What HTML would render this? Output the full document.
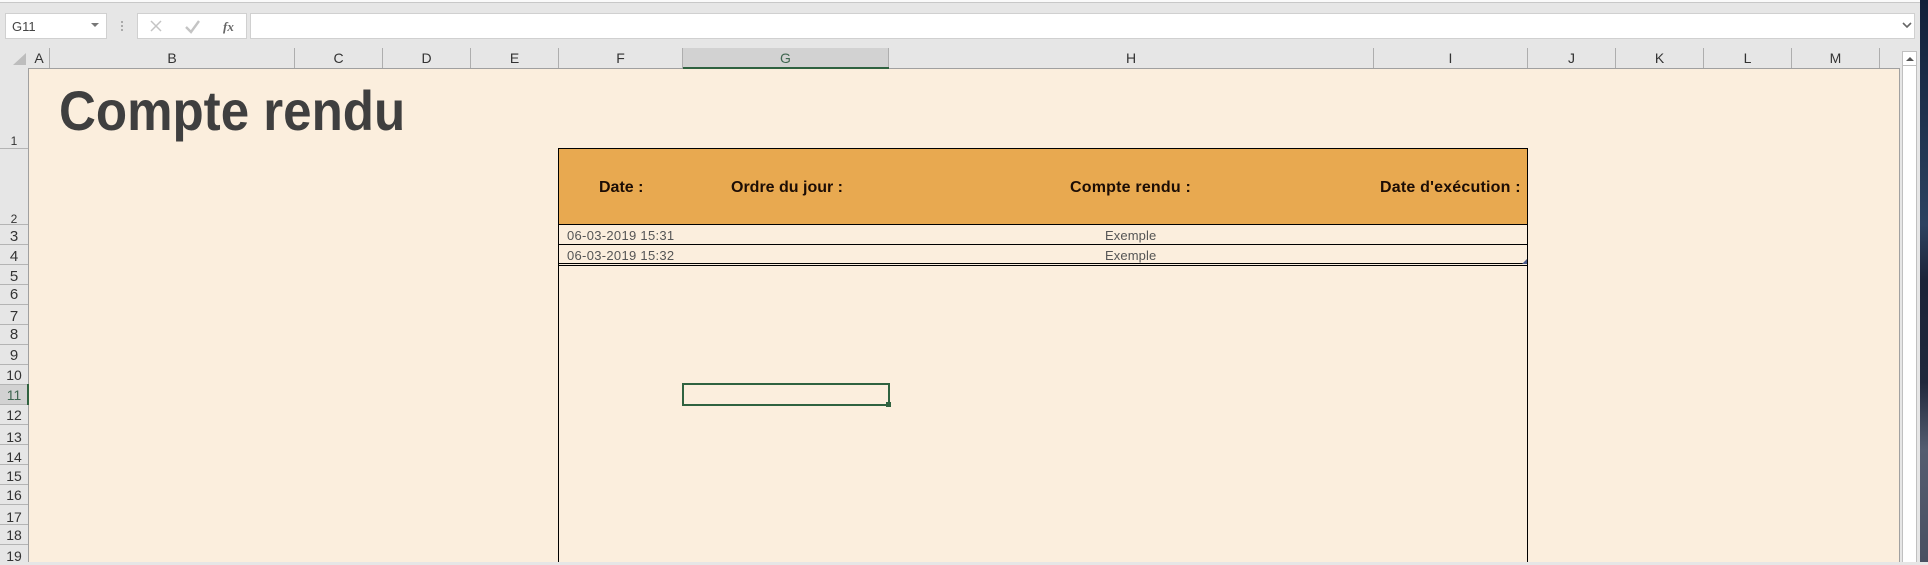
<!DOCTYPE html>
<html><head><meta charset="utf-8"><style>
html,body{margin:0;padding:0}
body{width:1928px;height:562px;overflow:hidden;position:relative;background:#e6e6e6;font-family:"Liberation Sans",sans-serif}
div{position:absolute;box-sizing:border-box}
.l{background:#000}
.ch{top:48px;height:20px;border-right:1px solid #aeaeae;text-align:center;font-size:14px;line-height:21px;color:#333}
.rh{left:0;width:28px;border-bottom:1px solid #b4b4b4;text-align:center;font-size:14px;color:#333;line-height:14px}
.hd{font-weight:bold;font-size:16px;color:#1c0d05;top:179px;line-height:18px;white-space:nowrap}
.tx{font-size:13px;color:#555;line-height:15px;white-space:nowrap}
</style></head><body>
<div style="left:0;top:0;width:1920px;height:2px;background:#fafafa"></div>
<div style="left:0;top:2px;width:1920px;height:1px;background:#c8c8c8"></div>
<!-- formula bar -->
<div style="left:5px;top:13px;width:102px;height:26px;background:#fff;border:1px solid #d0d0d0;font-size:13px;line-height:25px;padding-left:6px;color:#444">G11</div>
<div style="left:91px;top:23px;width:0;height:0;border-left:4px solid transparent;border-right:4px solid transparent;border-top:4px solid #777"></div>
<div style="left:121px;top:21px;width:2px;height:2px;background:#aaa"></div>
<div style="left:121px;top:25px;width:2px;height:2px;background:#aaa"></div>
<div style="left:121px;top:29px;width:2px;height:2px;background:#aaa"></div>
<div style="left:137px;top:13px;width:110px;height:26px;background:#fff;border:1px solid #d0d0d0"></div>
<svg style="position:absolute;left:137px;top:13px" width="110" height="26"><path d="M14 8L24 18M24 8L14 18" stroke="#c4c4c4" stroke-width="1.5" fill="none"/><path d="M49 14L54 19L62 8" stroke="#c4c4c4" stroke-width="2.4" fill="none"/><text x="86" y="18" font-family="Liberation Serif" font-style="italic" font-weight="bold" font-size="13" fill="#666">fx</text></svg>
<div style="left:250px;top:13px;width:1665px;height:26px;background:#fff;border:1px solid #d0d0d0"></div>
<svg style="position:absolute;left:1901px;top:21px" width="12" height="10"><path d="M2 2L6 6L10 2" stroke="#666" stroke-width="1.6" fill="none"/></svg>
<!-- corner -->
<div style="left:13px;top:53px;width:0;height:0;border-left:13px solid transparent;border-bottom:12px solid #bdbdbd"></div>
<!-- column headers -->
<div class="ch" style="left:29px;width:21px">A</div>
<div class="ch" style="left:50px;width:245px">B</div>
<div class="ch" style="left:295px;width:88px">C</div>
<div class="ch" style="left:383px;width:88px">D</div>
<div class="ch" style="left:471px;width:88px">E</div>
<div class="ch" style="left:559px;width:124px">F</div>
<div class="ch" style="left:683px;width:206px;background:#d2d2d2;color:#3f6650">G</div>
<div class="ch" style="left:889px;width:485px">H</div>
<div class="ch" style="left:1374px;width:154px">I</div>
<div class="ch" style="left:1528px;width:88px">J</div>
<div class="ch" style="left:1616px;width:88px">K</div>
<div class="ch" style="left:1704px;width:88px">L</div>
<div class="ch" style="left:1792px;width:88px">M</div>
<!-- row headers -->
<div class="rh" style="top:69px;height:80px;padding-top:65px;font-size:12px">1</div>
<div class="rh" style="top:149px;height:76px;padding-top:63px;font-size:12px">2</div>
<div class="rh" style="top:225px;height:20px;padding-top:5px;font-size:15px">3</div>
<div class="rh" style="top:245px;height:20px;padding-top:5px;font-size:15px">4</div>
<div class="rh" style="top:265px;height:20px;padding-top:5px;font-size:15px">5</div>
<div class="rh" style="top:285px;height:20px;padding-top:3px;font-size:15px">6</div>
<div class="rh" style="top:305px;height:20px;padding-top:5px;font-size:15px">7</div>
<div class="rh" style="top:325px;height:20px;padding-top:3px;font-size:15px">8</div>
<div class="rh" style="top:345px;height:20px;padding-top:4px;font-size:15px">9</div>
<div class="rh" style="top:365px;height:20px;padding-top:3px">10</div>
<div class="rh" style="top:385px;height:20px;padding-top:3px;background:#d2d2d2;color:#3f6650">11</div>
<div class="rh" style="top:405px;height:20px;padding-top:3px">12</div>
<div class="rh" style="top:425px;height:20px;padding-top:5px">13</div>
<div class="rh" style="top:445px;height:20px;padding-top:5px">14</div>
<div class="rh" style="top:465px;height:20px;padding-top:4px">15</div>
<div class="rh" style="top:485px;height:20px;padding-top:3px">16</div>
<div class="rh" style="top:505px;height:20px;padding-top:5px">17</div>
<div class="rh" style="top:525px;height:20px;padding-top:3px">18</div>
<div class="rh" style="top:545px;height:20px;padding-top:4px;border:0">19</div>
<!-- grid -->
<div style="left:28px;top:68px;width:1872px;height:494px;background:#fbeedd;border-left:1px solid #a0a0a0;border-top:1px solid #a0a0a0;border-right:1px solid #a0a0a0"></div>
<div style="left:683px;top:67px;width:206px;height:2px;background:#2f6240"></div>
<div style="left:27px;top:384px;width:2px;height:21px;background:#2f6240"></div>
<!-- title -->
<div style="left:59px;top:79px;font-size:56px;font-weight:bold;color:#3f3f3f;line-height:64px;white-space:nowrap;transform:scaleX(.912);transform-origin:0 0">Compte rendu</div>
<!-- table -->
<div style="left:559px;top:149px;width:968px;height:75px;background:#e8a950"></div>
<div class="l" style="left:558px;top:148px;width:970px;height:1px"></div>
<div class="l" style="left:558px;top:148px;width:1px;height:414px"></div>
<div class="l" style="left:1527px;top:148px;width:1px;height:414px"></div>
<div class="l" style="left:558px;top:224px;width:970px;height:1px"></div>
<div class="l" style="left:558px;top:244px;width:970px;height:1px"></div>
<div class="l" style="left:558px;top:263px;width:970px;height:1px"></div>
<div class="l" style="left:558px;top:265px;width:970px;height:1px"></div>
<div style="left:1522px;top:259px;width:0;height:0;border-left:5px solid transparent;border-bottom:5px solid #4a5a8a"></div>
<div class="hd" style="left:599px">Date :</div>
<div class="hd" style="left:731px">Ordre du jour :</div>
<div class="hd" style="left:1070px;letter-spacing:.2px">Compte rendu :</div>
<div class="hd" style="left:1380px;letter-spacing:.2px">Date d'exécution :</div>
<div class="tx" style="left:567px;top:228px;letter-spacing:.3px">06-03-2019 15:31</div>
<div class="tx" style="left:567px;top:248px;letter-spacing:.3px">06-03-2019 15:32</div>
<div class="tx" style="left:1105px;top:228px;letter-spacing:.1px">Exemple</div>
<div class="tx" style="left:1105px;top:248px;letter-spacing:.1px">Exemple</div>
<!-- selection -->
<div style="left:682px;top:383px;width:208px;height:23px;border:2px solid #2f6240"></div>
<div style="left:886px;top:402px;width:5px;height:5px;background:#2f6240"></div>
<!-- scrollbar -->
<div style="left:1902px;top:51px;width:15px;height:511px;background:#fff;border-left:1px solid #c0c0c0;border-right:1px solid #c0c0c0"></div>
<div style="left:1902px;top:51px;width:15px;height:15px;background:#fff;border:1px solid #c0c0c0"></div>
<div style="left:1906px;top:57px;width:0;height:0;border-left:4px solid transparent;border-right:4px solid transparent;border-bottom:4px solid #555"></div>
<!-- desktop strip -->
<div style="left:1920px;top:0;width:8px;height:562px;background:linear-gradient(180deg,#12203a 0,#2c4260 40%,#1c2438 50%,#20283c 68%,#555d70 80%,#4a5062 100%)"></div>
</body></html>
